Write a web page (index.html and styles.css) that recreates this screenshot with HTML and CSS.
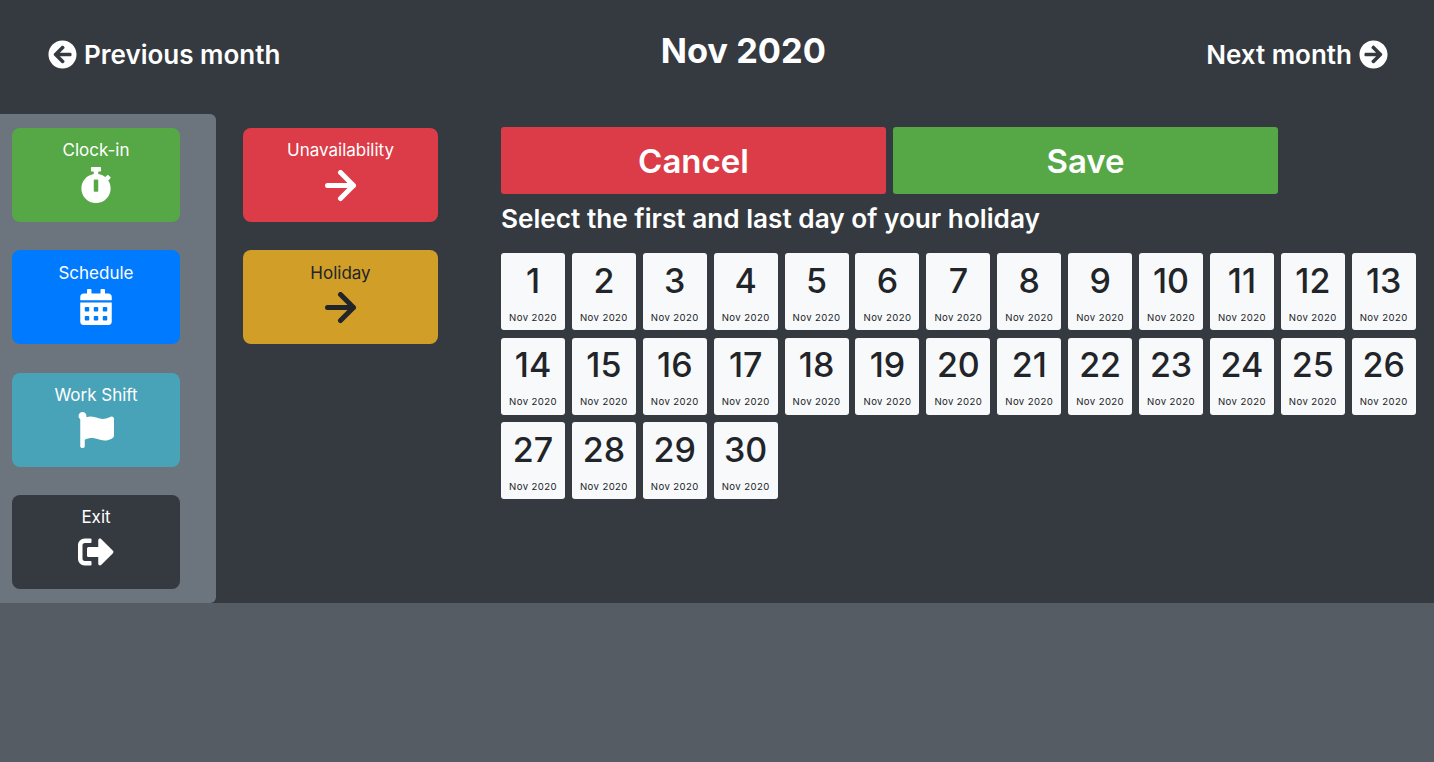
FILE: index.html
```html
<!DOCTYPE html>
<html lang="en">
<head>
<meta charset="UTF-8">
<meta name="viewport" content="width=device-width, initial-scale=1.0">
<title>Holiday</title>
<link rel="stylesheet" href="styles.css">
</head>
<body>

<div class="panel">
    <div class="top-bar">
        <a class="month-link">
            <svg class="nav-icon" viewBox="0 0 512 512"><path d="M256 504C119 504 8 393 8 256S119 8 256 8s248 111 248 248-111 248-248 248zm28.9-143.6L209.4 288H392c13.3 0 24-10.7 24-24v-16c0-13.3-10.7-24-24-24H209.4l75.5-72.4c9.7-9.3 9.9-24.8.4-34.3l-11-10.9c-9.4-9.4-24.6-9.4-33.9 0L107.7 239c-9.4 9.4-9.4 24.6 0 33.9l132.7 132.7c9.4 9.4 24.6 9.4 33.9 0l11-10.9c9.5-9.5 9.3-25-.4-34.3z"/></svg>
            Previous month
        </a>
        <h1 class="month-title">Nov 2020</h1>
        <a class="month-link">
            Next month
            <svg class="nav-icon" viewBox="0 0 512 512"><path d="M256 8c137 0 248 111 248 248S393 504 256 504 8 393 8 256 119 8 256 8zm-28.9 143.6l75.5 72.4H120c-13.3 0-24 10.7-24 24v16c0 13.3 10.7 24 24 24h182.6l-75.5 72.4c-9.7 9.3-9.9 24.8-.4 34.3l11 10.9c9.4 9.4 24.6 9.4 33.9 0L404.3 273c9.4-9.4 9.4-24.6 0-33.9L271.6 106.3c-9.4-9.4-24.6-9.4-33.9 0l-11 10.9c-9.5 9.6-9.3 25.1.4 34.4z"/></svg>
        </a>
    </div>

    <div class="content">
        <div class="sidebar">
            <a class="tile green">
                <span>Clock-in</span>
                <svg class="tile-icon" viewBox="0 0 448 512"><path d="M432 304c0 114.9-93.1 208-208 208S16 418.9 16 304c0-104 76.3-190.2 176-205.5V64h-28c-6.6 0-12-5.4-12-12V12c0-6.6 5.4-12 12-12h120c6.6 0 12 5.4 12 12v40c0 6.6-5.4 12-12 12h-28v34.5c37.5 5.8 71.7 21.6 99.7 44.6l27.5-27.5c4.7-4.7 12.3-4.7 17 0l28.3 28.3c4.7 4.7 4.7 12.3 0 17l-29.4 29.4-.6.6C419.7 223.3 432 262.2 432 304zm-176 36V188.5c0-6.6-5.4-12-12-12h-40c-6.6 0-12 5.4-12 12V340c0 6.6 5.4 12 12 12h40c6.6 0 12-5.4 12-12z"/></svg>
            </a>
            <a class="tile blue">
                <span>Schedule</span>
                <svg class="tile-icon" viewBox="0 0 448 512"><path d="M0 464c0 26.5 21.5 48 48 48h352c26.5 0 48-21.5 48-48V192H0v272zm320-196c0-6.6 5.4-12 12-12h40c6.6 0 12 5.4 12 12v40c0 6.6-5.4 12-12 12h-40c-6.6 0-12-5.4-12-12v-40zm0 128c0-6.6 5.4-12 12-12h40c6.6 0 12 5.4 12 12v40c0 6.6-5.4 12-12 12h-40c-6.6 0-12-5.4-12-12v-40zM192 268c0-6.6 5.4-12 12-12h40c6.6 0 12 5.4 12 12v40c0 6.6-5.4 12-12 12h-40c-6.6 0-12-5.4-12-12v-40zm0 128c0-6.6 5.4-12 12-12h40c6.6 0 12 5.4 12 12v40c0 6.6-5.4 12-12 12h-40c-6.6 0-12-5.4-12-12v-40zM64 268c0-6.6 5.4-12 12-12h40c6.6 0 12 5.4 12 12v40c0 6.6-5.4 12-12 12H76c-6.6 0-12-5.4-12-12v-40zm0 128c0-6.6 5.4-12 12-12h40c6.6 0 12 5.4 12 12v40c0 6.6-5.4 12-12 12H76c-6.6 0-12-5.4-12-12v-40zM400 64h-48V16c0-8.8-7.2-16-16-16h-32c-8.8 0-16 7.2-16 16v48H160V16c0-8.8-7.2-16-16-16h-32c-8.8 0-16 7.2-16 16v48H48C21.5 64 0 85.5 0 112v48h448v-48c0-26.5-21.5-48-48-48z"/></svg>
            </a>
            <a class="tile teal">
                <span>Work Shift</span>
                <svg class="tile-icon" viewBox="0 0 512 512"><path d="M349.565 98.783C295.978 98.783 251.721 64 184.348 64c-24.955 0-47.309 4.384-68.045 12.013a55.947 55.947 0 0 0 3.586-23.562C118.117 24.015 94.806 1.206 66.338.048 34.345-1.254 8 24.296 8 56c0 19.026 9.497 35.825 24 45.945V488c0 13.255 10.745 24 24 24h16c13.255 0 24-10.745 24-24v-94.4c28.311-12.064 63.582-22.122 114.435-22.122 53.588 0 97.844 34.783 165.217 34.783 48.169 0 86.667-16.294 122.505-40.858C506.84 359.452 512 349.571 512 339.045v-243.1c0-23.393-24.269-38.87-45.485-29.016-34.338 15.948-76.454 31.854-116.95 31.854z"/></svg>
            </a>
            <a class="tile dark">
                <span>Exit</span>
                <svg class="tile-icon" viewBox="0 0 512 512"><path d="M497 273L329 441c-15 15-41 4.5-41-17v-96H152c-13.3 0-24-10.7-24-24v-96c0-13.3 10.7-24 24-24h136V88c0-21.4 25.9-32 41-17l168 168c9.3 9.4 9.3 24.6 0 34zM192 436v-40c0-6.6-5.4-12-12-12H96c-17.7 0-32-14.3-32-32V160c0-17.7 14.3-32 32-32h84c6.6 0 12-5.4 12-12V76c0-6.6-5.4-12-12-12H96c-53 0-96 43-96 96v192c0 53 43 96 96 96h84c6.6 0 12-5.4 12-12z"/></svg>
            </a>
        </div>

        <div class="submenu">
            <a class="tile red">
                <span>Unavailability</span>
                <svg class="arrow-icon" viewBox="0 0 32 32"><path d="M2.5 15.5H28.5M15.5 2.5l13 13-13 13"/></svg>
            </a>
            <a class="tile yellow">
                <span>Holiday</span>
                <svg class="arrow-icon" viewBox="0 0 32 32"><path d="M2.5 15.5H28.5M15.5 2.5l13 13-13 13"/></svg>
            </a>
        </div>

        <div class="main">
            <div class="actions">
                <button class="action-btn cancel">Cancel</button>
                <button class="action-btn save">Save</button>
            </div>
            <h2 class="hint">Select the first and last day of your holiday</h2>
            <div class="days">
                <div class="day"><b>1</b><small>Nov 2020</small></div>
                <div class="day"><b>2</b><small>Nov 2020</small></div>
                <div class="day"><b>3</b><small>Nov 2020</small></div>
                <div class="day"><b>4</b><small>Nov 2020</small></div>
                <div class="day"><b>5</b><small>Nov 2020</small></div>
                <div class="day"><b>6</b><small>Nov 2020</small></div>
                <div class="day"><b>7</b><small>Nov 2020</small></div>
                <div class="day"><b>8</b><small>Nov 2020</small></div>
                <div class="day"><b>9</b><small>Nov 2020</small></div>
                <div class="day"><b>10</b><small>Nov 2020</small></div>
                <div class="day"><b>11</b><small>Nov 2020</small></div>
                <div class="day"><b>12</b><small>Nov 2020</small></div>
                <div class="day"><b>13</b><small>Nov 2020</small></div>
                <div class="day"><b>14</b><small>Nov 2020</small></div>
                <div class="day"><b>15</b><small>Nov 2020</small></div>
                <div class="day"><b>16</b><small>Nov 2020</small></div>
                <div class="day"><b>17</b><small>Nov 2020</small></div>
                <div class="day"><b>18</b><small>Nov 2020</small></div>
                <div class="day"><b>19</b><small>Nov 2020</small></div>
                <div class="day"><b>20</b><small>Nov 2020</small></div>
                <div class="day"><b>21</b><small>Nov 2020</small></div>
                <div class="day"><b>22</b><small>Nov 2020</small></div>
                <div class="day"><b>23</b><small>Nov 2020</small></div>
                <div class="day"><b>24</b><small>Nov 2020</small></div>
                <div class="day"><b>25</b><small>Nov 2020</small></div>
                <div class="day"><b>26</b><small>Nov 2020</small></div>
                <div class="day"><b>27</b><small>Nov 2020</small></div>
                <div class="day"><b>28</b><small>Nov 2020</small></div>
                <div class="day"><b>29</b><small>Nov 2020</small></div>
                <div class="day"><b>30</b><small>Nov 2020</small></div>
            </div>
        </div>
    </div>
</div>

</body>
</html>
```

FILE: styles.css
```css
body {
    margin: 0;
    height: 762px;
    overflow: hidden;
    background-color: #555c64;
    font-family: "Inter", "Liberation Sans", sans-serif;
    color: #fff;
}

.panel {
    height: 603px;
    background-color: #343a40;
}

.top-bar {
    display: flex;
    justify-content: space-between;
    align-items: center;
    height: 114px;
    box-sizing: border-box;
    padding: 0 46px 6px 48px;
}

.month-link {
    display: flex;
    align-items: center;
    gap: 7px;
    font-size: 26px;
    font-weight: 600;
}

.nav-icon {
    width: 29px;
    height: 29px;
    fill: #fff;
}

.month-title {
    margin: 0 0 8px;
    font-size: 34.4px;
    font-weight: 700;
}

.content {
    display: flex;
    height: 489px;
}

.sidebar {
    width: 216px;
    box-sizing: border-box;
    padding: 14px 36px 14px 12px;
    display: flex;
    flex-direction: column;
    justify-content: space-between;
    background-color: #6c757d;
    border-radius: 0 6px 6px 0;
}

.submenu {
    width: 195px;
    margin-left: 27px;
    padding-top: 14px;
    display: flex;
    flex-direction: column;
    gap: 28.4px;
}

.tile {
    height: 94px;
    box-sizing: border-box;
    padding-top: 11.4px;
    display: flex;
    flex-direction: column;
    align-items: center;
    border-radius: 8px;
    font-size: 17px;
    line-height: 22px;
}

.tile-icon {
    width: 36px;
    height: 36px;
    margin-top: 5.6px;
    fill: #fff;
}

.arrow-icon {
    width: 32px;
    height: 32px;
    margin-top: 8.6px;
    fill: none;
    stroke: currentColor;
    stroke-width: 5;
    stroke-linecap: round;
    stroke-linejoin: round;
}

.green { background-color: #56a846; }
.blue { background-color: #007bff; }
.teal { background-color: #48a2b8; }
.dark { background-color: #343a40; }
.red { background-color: #dc3c48; }
.yellow { background-color: #d19e28; color: #212529; }

.main {
    margin-left: 63px;
    padding-top: 13px;
}

.actions {
    display: flex;
    gap: 7px;
}

.action-btn {
    width: 385px;
    height: 67px;
    padding-top: 2px;
    border: none;
    border-radius: 3px;
    color: #fff;
    font-family: inherit;
    font-size: 33px;
    font-weight: 600;
}

.cancel { background-color: #dc3c48; }
.save { background-color: #56a846; }

.hint {
    margin: 8px 0 17px;
    font-size: 26.2px;
    line-height: 34px;
    font-weight: 600;
}

.days {
    display: grid;
    grid-template-columns: repeat(13, 64px);
    grid-auto-rows: 77px;
    gap: 7.5px 6.9px;
}

.day {
    display: flex;
    flex-direction: column;
    align-items: center;
    background-color: #f8f9fa;
    border-radius: 3px;
    color: #212529;
}

.day b {
    margin-top: 6.9px;
    font-size: 34px;
    line-height: 41px;
    font-weight: 500;
}

.day small {
    margin-top: 10px;
    font-size: 9.6px;
    line-height: 14px;
    letter-spacing: 0.4px;
}
```
